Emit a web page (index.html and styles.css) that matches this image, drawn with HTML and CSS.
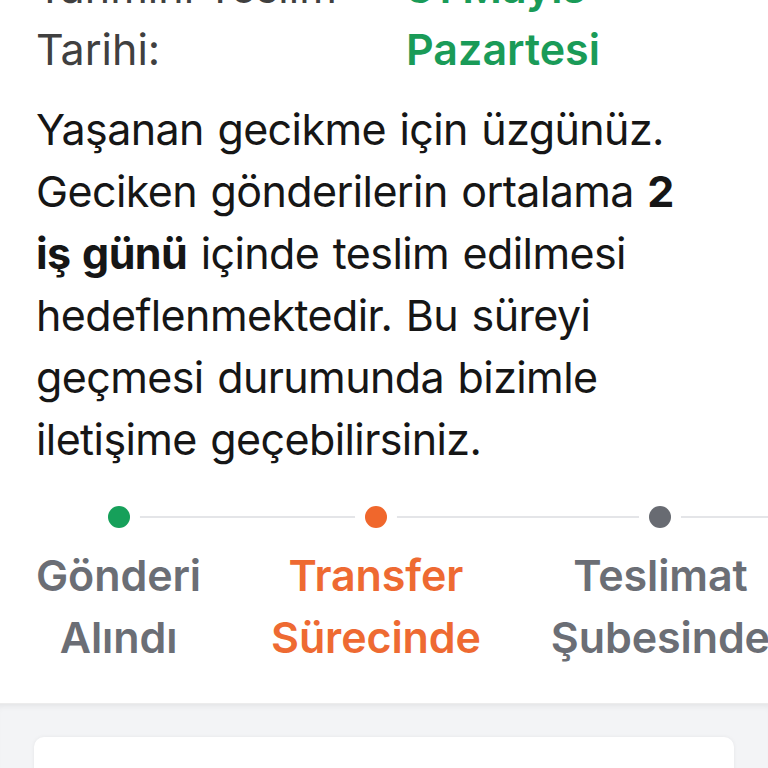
FILE: index.html
```html
<!DOCTYPE html>
<html lang="tr">
<head>
  <meta charset="UTF-8">
  <meta name="viewport" content="width=device-width, initial-scale=1">
  <title>Gönderi Takibi</title>
  <link rel="stylesheet" href="styles.css">
</head>
<body>
  <div class="status-box">
    <div class="eta">
      <div class="eta-label">Tahmini Teslim<br>Tarihi:</div>
      <div class="eta-value">31 Mayıs<br>Pazartesi</div>
    </div>
    <p class="delay-note">Yaşanan gecikme için üzgünüz. Geciken gönderilerin ortalama <b>2 iş günü</b> içinde teslim edilmesi hedeflenmektedir. Bu süreyi geçmesi durumunda bizimle iletişime geçebilirsiniz.</p>
    <div class="steps">
      <div class="step done">
        <span class="dot"></span>
        <div class="step-name">Gönderi<br>Alındı</div>
      </div>
      <div class="step active">
        <span class="dot"></span>
        <div class="step-name">Transfer<br>Sürecinde</div>
      </div>
      <div class="step">
        <span class="dot"></span>
        <div class="step-name">Teslimat<br>Şubesinde</div>
      </div>
      <div class="step">
        <span class="dot"></span>
        <div class="step-name">Dağıtımda</div>
      </div>
    </div>
  </div>
  <div class="page-bottom">
    <div class="card"></div>
  </div>
</body>
</html>
```

FILE: styles.css
```css
body { margin: 0; background: #f3f4f6; font-family: Inter, "Noto Sans", sans-serif; color: #161616; overflow: hidden; }
.status-box { background: #fff; padding: 0 36px 35px; }
.eta { display: grid; grid-template-columns: 370px 1fr; font-size: 43px; line-height: 62px; margin-top: -44px; }
.eta-label { color: #404040; }
.eta-value { color: #1a9b58; font-weight: 600; }
.delay-note { font-size: 43px; line-height: 62px; margin: 18px 0 0; letter-spacing: -0.6px; word-spacing: 2px; max-width: 664px; }
.delay-note b { font-weight: 700; }
.steps { display: flex; gap: 70px; margin-top: 36px; white-space: nowrap; overflow: hidden; margin-right: -36px; position: relative; }
.step { flex: 0 0 auto; display: flex; flex-direction: column; align-items: center; position: relative; }
.step:first-child::after { content: ""; position: absolute; top: 10px; left: 50%; width: 2000px; height: 2px; background: #e4e5e8; }
.dot { width: 22px; height: 22px; border-radius: 50%; background: #686b72; box-shadow: 0 0 0 10px #fff; position: relative; z-index: 1; }
.step.done .dot { background: #16a05a; }
.step.active .dot { background: #f0672c; }
.step-name { margin-top: 16px; font-size: 43px; line-height: 62px; font-weight: 600; color: #6b6e75; text-align: center; letter-spacing: -0.1px; }
.step.active .step-name { color: #ee6a32; }
.page-bottom { padding: 33px 34px 0; box-shadow: inset 0 6px 6px -4px rgba(0,0,0,0.07); border-top: 1px solid #ececec; }
.card { background: #fff; height: 200px; border-radius: 10px; box-shadow: 0 0 4px rgba(0,0,0,0.06); }
```
